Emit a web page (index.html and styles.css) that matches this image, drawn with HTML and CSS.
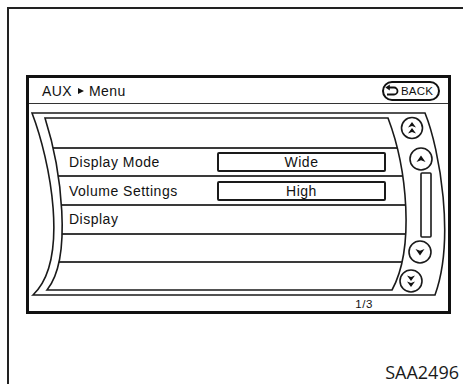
FILE: index.html
```html
<!DOCTYPE html>
<html>
<head>
<meta charset="utf-8">
<link rel="stylesheet" href="styles.css">
</head>
<body>
<div class="page">
  <div class="screen">
    <div class="header">
      <div class="crumb"><span>AUX</span><span class="tri"></span><span>Menu</span></div>
      <div class="back">
        <svg class="back-icon" width="15" height="13" viewBox="0 0 15 13"><path d="M3.5 3.5 H9 A3.5 3.5 0 0 1 9 10.5 H2" fill="none" stroke="#111" stroke-width="1.8"/><polygon points="0.3,3.5 4.8,0.6 4.8,6.4" fill="#111"/></svg>
        <span>BACK</span>
      </div>
    </div>
    <div class="list-area">
      <svg class="frame" width="419" height="207" viewBox="0 0 419 207">
        <g fill="none" stroke="#1a1a1a" stroke-width="1.6">
          <path d="M3 9 L396 9 C411 46 426 136 406 191 L4 191 C41 156 21 56 3 9 Z"/>
          <path transform="translate(16 14)" d="M0 0 L343 0 C362 50 370 130 347 172 L2 172 C28 140 16 50 0 0 Z"/>
          <circle cx="383" cy="24" r="10.5"/>
          <circle cx="392" cy="55" r="11"/>
          <rect x="392" y="69" width="10" height="64" rx="1"/>
          <circle cx="391" cy="148" r="11"/>
          <circle cx="382" cy="177" r="11"/>
        </g>
        <g fill="#111">
          <path transform="translate(383 21)" d="M0 -3 L4 2.5 L0 1 L-4 2.5 Z"/>
          <path transform="translate(383 27)" d="M0 -3 L4 2.5 L0 1 L-4 2.5 Z"/>
          <path transform="translate(392 55)" d="M0 -3.5 L4.5 3 L0 1.2 L-4.5 3 Z"/>
          <path transform="translate(391 148) rotate(180)" d="M0 -3.5 L4.5 3 L0 1.2 L-4.5 3 Z"/>
          <path transform="translate(382 174) rotate(180)" d="M0 -3 L4 2.5 L0 1 L-4 2.5 Z"/>
          <path transform="translate(382 180) rotate(180)" d="M0 -3 L4 2.5 L0 1 L-4 2.5 Z"/>
        </g>
      </svg>
      <div class="rows">
        <div class="row"></div>
        <div class="row"><span class="label">Display Mode</span><span class="value">Wide</span></div>
        <div class="row"><span class="label">Volume Settings</span><span class="value">High</span></div>
        <div class="row"><span class="label">Display</span></div>
        <div class="row"></div>
        <div class="row"></div>
      </div>
      <div class="pager">1/3</div>
    </div>
  </div>
  <div class="caption">SAA2496</div>
</div>
</body>
</html>
```

FILE: styles.css
```css
html, body {
  margin: 0;
  padding: 0;
  background: #fff;
}
body {
  width: 463px;
  height: 384px;
  overflow: hidden;
  font-family: "Liberation Sans", Arial, sans-serif;
  color: #111;
}
.page {
  margin: 7px 0 0 7px;
  height: 377px;
  border-top: 2px solid #222;
  border-left: 2px solid #222;
  box-sizing: border-box;
  padding-top: 66px;
  padding-left: 17px;
}
.screen {
  width: 425px;
  height: 239px;
  box-sizing: border-box;
  border: 3px solid #111;
  display: flex;
  flex-direction: column;
}
.header {
  height: 25px;
  border-bottom: 1px solid #333;
  display: flex;
  align-items: center;
  justify-content: space-between;
  padding: 0 8px 0 13px;
  flex: none;
}
.crumb {
  display: flex;
  align-items: center;
  font-size: 14px;
  letter-spacing: 0.4px;
}
.tri {
  width: 0;
  height: 0;
  border-left: 6px solid #111;
  border-top: 3.5px solid transparent;
  border-bottom: 3.5px solid transparent;
  margin: 0 5px 0 6px;
}
.back {
  height: 20px;
  box-sizing: border-box;
  border: 2px solid #111;
  border-radius: 10px;
  display: flex;
  align-items: center;
  padding: 0 3px 0 1px;
  font-size: 11.5px;
  letter-spacing: 0.2px;
  width: 58px;
}
.back-icon {
  margin-right: 1px;
  flex: none;
}
.list-area {
  position: relative;
  flex: 1;
  display: flex;
  flex-direction: column;
  padding-top: 14px;
}
.frame {
  position: absolute;
  left: 0;
  top: 0;
  z-index: 2;
}
.rows {
  margin-left: 16px;
  width: 370px;
  height: 172px;
  display: grid;
  grid-template-rows: repeat(6, 1fr);
  clip-path: path('M0 0 L343 0 C362 50 370 130 347 172 L2 172 C28 140 16 50 0 0 Z');
}
.row {
  display: grid;
  grid-template-columns: 172px 169px;
  align-items: center;
  font-size: 14px;
  letter-spacing: 0.5px;
}
.row + .row {
  border-top: 2px solid #3a3a3a;
}
.label {
  padding-left: 24px;
  white-space: nowrap;
}
.value {
  height: 20px;
  box-sizing: border-box;
  border: 2px solid #1a1a1a;
  border-radius: 2px;
  display: flex;
  align-items: center;
  justify-content: center;
}
.pager {
  margin-top: 7px;
  align-self: flex-end;
  margin-right: 75px;
  font-size: 11.5px;
  letter-spacing: 0.6px;
  line-height: 14px;
}
.caption {
  margin-top: 48px;
  width: 433px;
  text-align: right;
  font-family: "Open Sans", "Noto Sans", sans-serif;
  font-size: 18px;
  line-height: 20px;
  color: #1a1a1a;
}
```
